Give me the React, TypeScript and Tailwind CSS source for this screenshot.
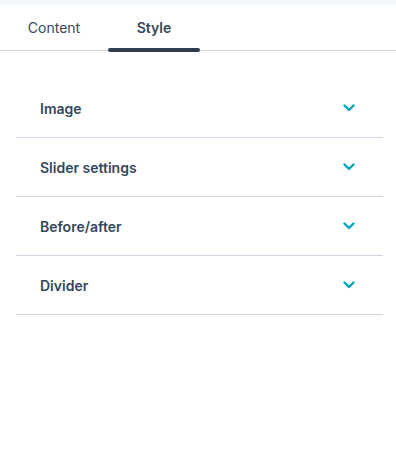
import React, { useState } from 'react';

const sections = ['Image', 'Slider settings', 'Before/after', 'Divider'];

function Chevron() {
    return (
        <svg width="12" height="8" viewBox="0 0 12 8" fill="none">
            <path d="M1.5 1.5L6 6L10.5 1.5" stroke="#00a4bd" strokeWidth="2.4" strokeLinecap="round" strokeLinejoin="round" />
        </svg>
    );
}

export default function App() {
    const [tab, setTab] = useState('Style');

    return (
        <div className="w-[396px] h-[458px] bg-white font-['Inter',sans-serif] text-[#33475b]">
            <div className="h-[5px] bg-[#f5f8fa]" />
            <div className="flex gap-2 pl-2 border-b border-[#cbd6e2] h-[46px]">
                {['Content', 'Style'].map((t) => (
                    <button
                        key={t}
                        onClick={() => setTab(t)}
                        className={`relative w-[92px] text-[14px] ${tab === t ? 'font-semibold' : ''}`}
                    >
                        {t}
                        {tab === t && <span className="absolute left-0 right-0 -bottom-[2px] h-[4px] rounded-full bg-[#2d3e50]" />}
                    </button>
                ))}
            </div>
            <div className="pl-4 pr-[13px] pt-[28px]">
                {sections.map((s) => (
                    <div key={s} className="flex items-center justify-between h-[59px] pl-6 pr-[28px] border-b border-[#cbd6e2]">
                        <span className="text-[14px] font-semibold">{s}</span>
                        <Chevron />
                    </div>
                ))}
            </div>
        </div>
    );
}
